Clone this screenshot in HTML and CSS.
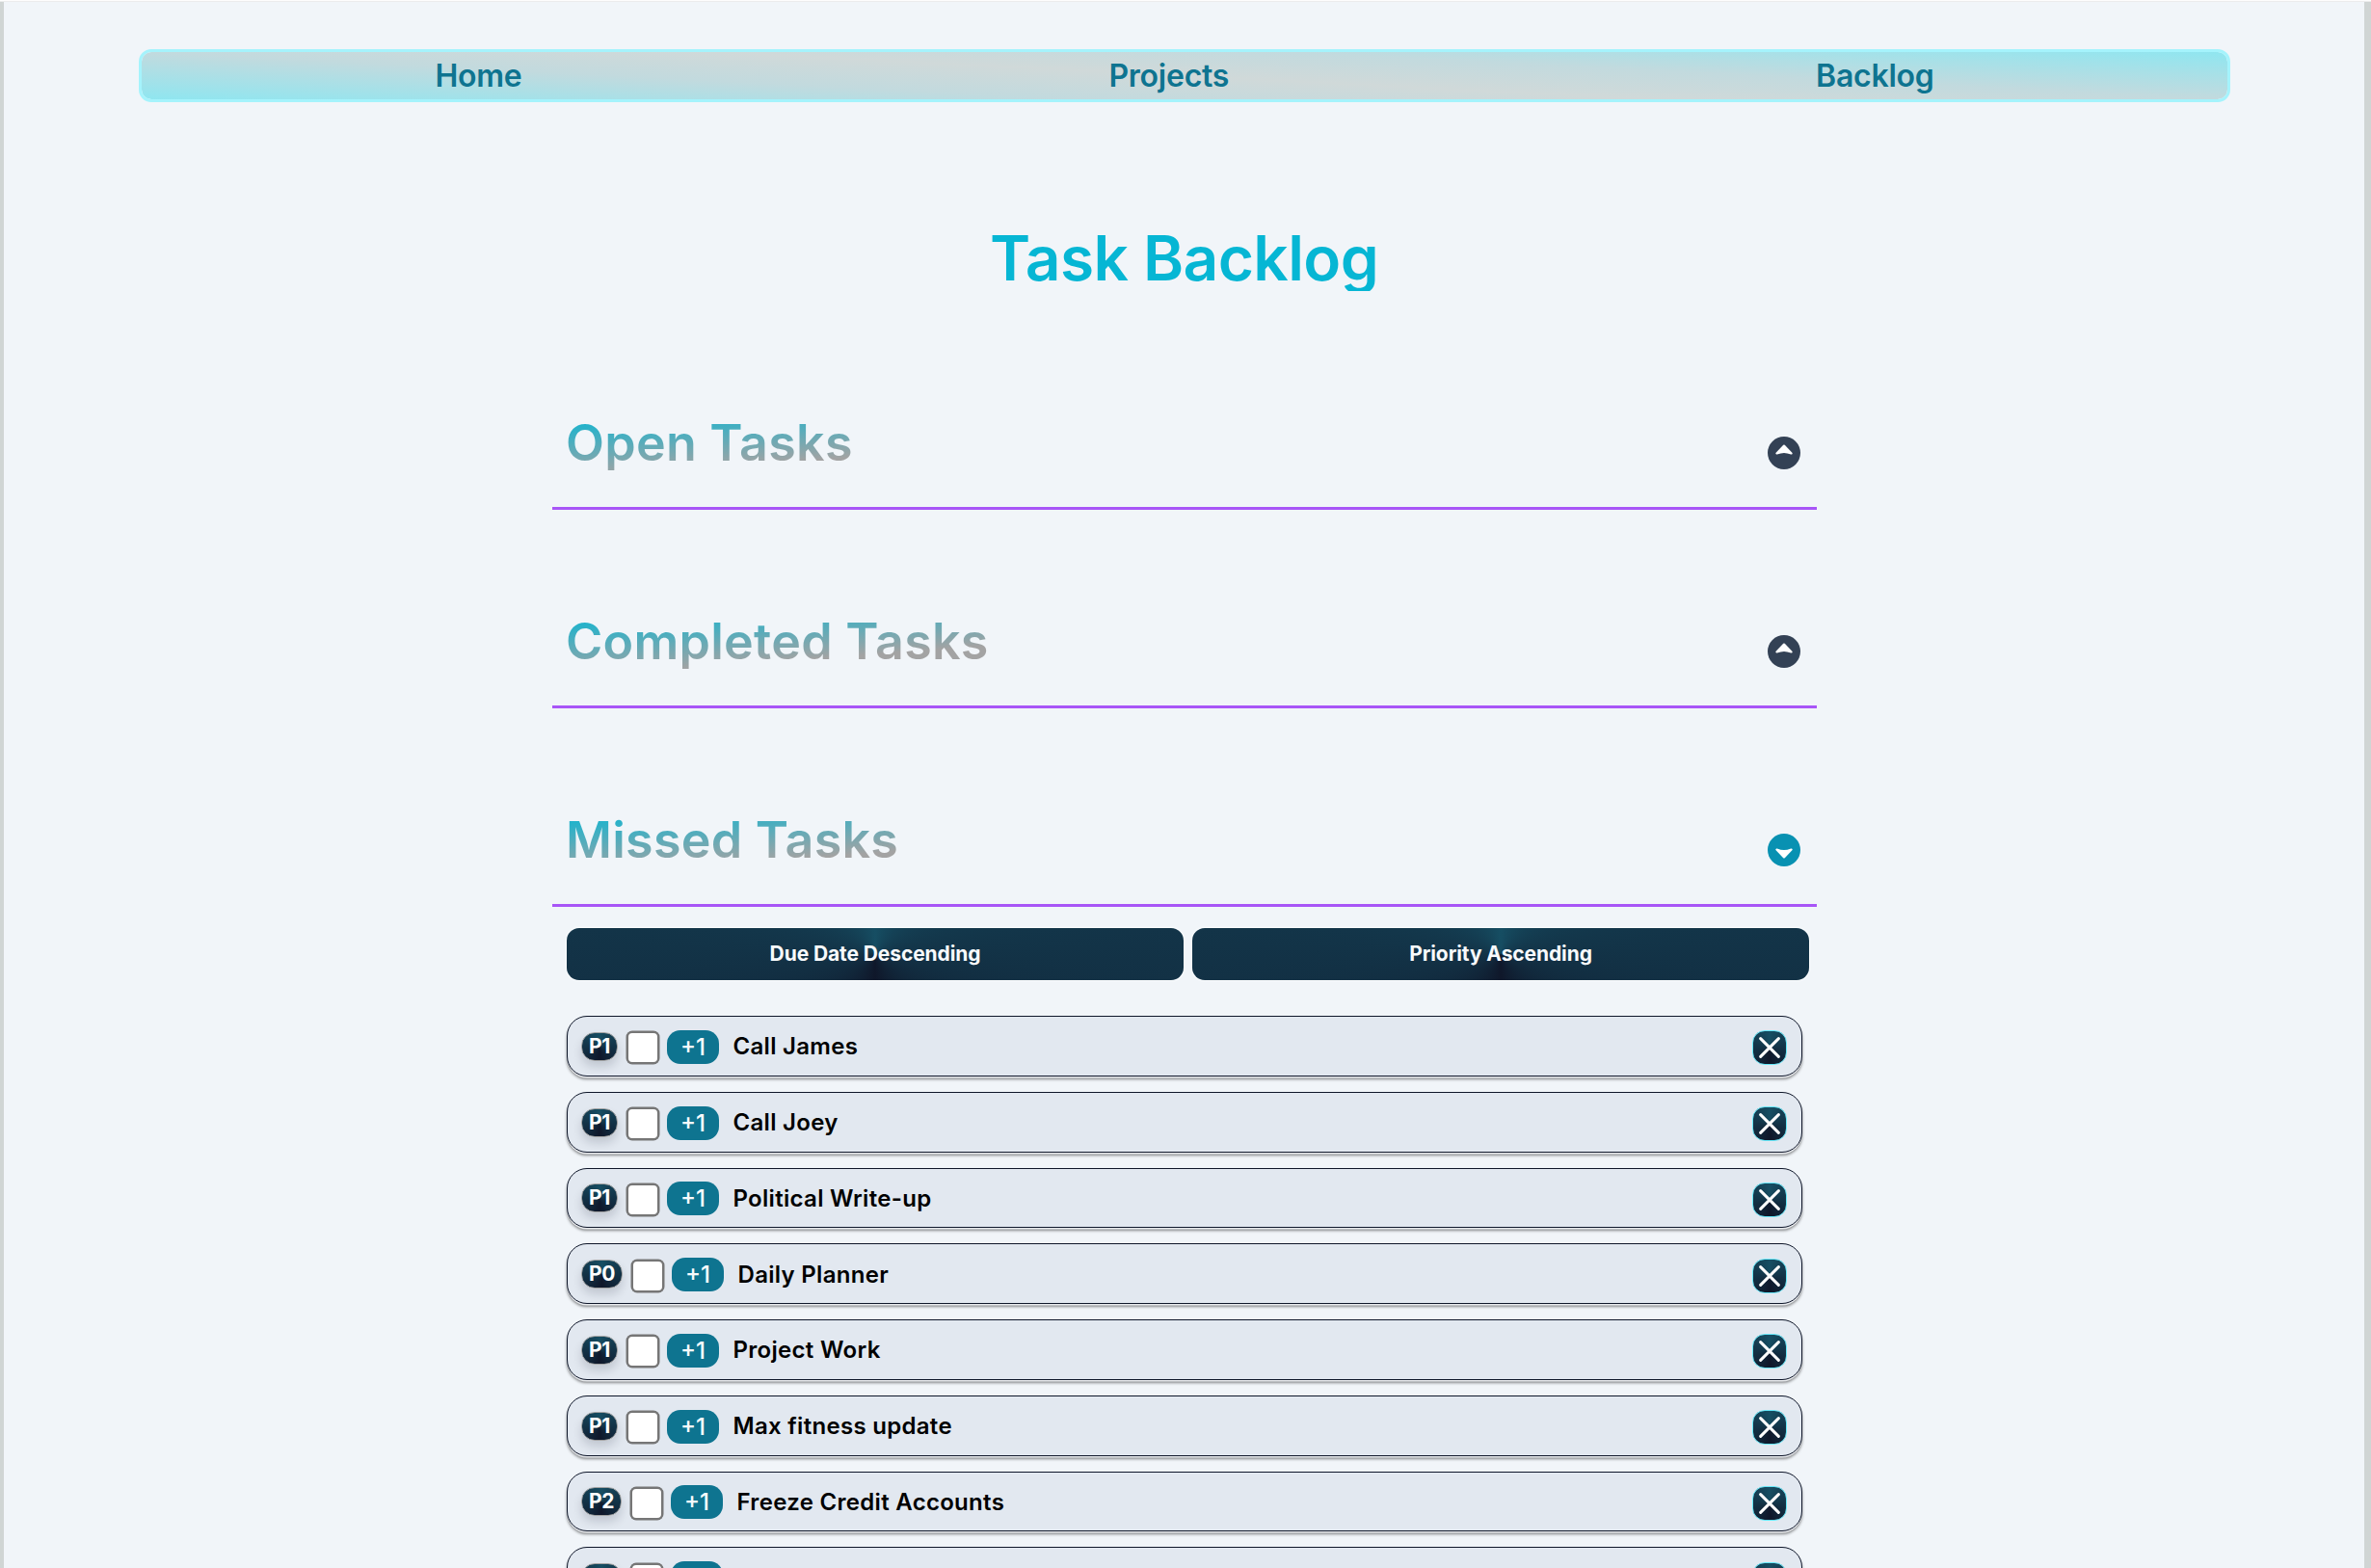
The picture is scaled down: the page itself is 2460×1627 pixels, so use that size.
FILE: index.html
```html
<!DOCTYPE html>
<html lang="en">
<head>
<meta charset="utf-8">
<title>Task Backlog</title>
<link rel="stylesheet" href="styles.css">
</head>
<body>
<svg class="sprite" aria-hidden="true">
  <symbol id="caret" viewBox="0 0 34 34"><path d="M17 9.6 L24.6 17.4 Q20.5 15.8 17 15.8 Q13.5 15.8 9.4 17.4 Z" fill="#fff" stroke="#fff" stroke-width="2.2" stroke-linejoin="round"/></symbol>
  <symbol id="cross" viewBox="0 0 20 20"><path d="M1.5 1.5 L18.5 18.5 M18.5 1.5 L1.5 18.5" fill="none" stroke="#fff" stroke-width="2.7" stroke-linecap="round"/></symbol>
</svg>
<div class="page">
  <nav class="nav"><a>Home</a><a>Projects</a><a>Backlog</a></nav>
  <h1 class="title">Task Backlog</h1>
  <main class="content">
    <section class="group">
      <header class="group-head"><h2>Open Tasks</h2><button class="toggle"><svg><use href="#caret"/></svg></button></header>
    </section>
    <section class="group">
      <header class="group-head"><h2>Completed Tasks</h2><button class="toggle"><svg><use href="#caret"/></svg></button></header>
    </section>
    <section class="group">
      <header class="group-head"><h2>Missed Tasks</h2><button class="toggle expanded"><svg><use href="#caret"/></svg></button></header>
      <div class="sorts"><button class="sort">Due Date Descending</button><button class="sort">Priority Ascending</button></div>
      <ul class="tasks">
        <li class="task"><span class="prio p1">P1</span><span class="check"></span><button class="plus">+1</button><span class="name">Call James</span><button class="remove"><svg><use href="#cross"/></svg></button></li>
        <li class="task"><span class="prio p1">P1</span><span class="check"></span><button class="plus">+1</button><span class="name">Call Joey</span><button class="remove"><svg><use href="#cross"/></svg></button></li>
        <li class="task"><span class="prio p1">P1</span><span class="check"></span><button class="plus">+1</button><span class="name">Political Write-up</span><button class="remove"><svg><use href="#cross"/></svg></button></li>
        <li class="task"><span class="prio p0">P0</span><span class="check"></span><button class="plus">+1</button><span class="name">Daily Planner</span><button class="remove"><svg><use href="#cross"/></svg></button></li>
        <li class="task"><span class="prio p1">P1</span><span class="check"></span><button class="plus">+1</button><span class="name">Project Work</span><button class="remove"><svg><use href="#cross"/></svg></button></li>
        <li class="task"><span class="prio p1">P1</span><span class="check"></span><button class="plus">+1</button><span class="name">Max fitness update</span><button class="remove"><svg><use href="#cross"/></svg></button></li>
        <li class="task"><span class="prio p2">P2</span><span class="check"></span><button class="plus">+1</button><span class="name">Freeze Credit Accounts</span><button class="remove"><svg><use href="#cross"/></svg></button></li>
        <li class="task"><span class="prio p2"></span><span class="check"></span><button class="plus"></button><span class="name"></span><button class="remove"><svg><use href="#cross"/></svg></button></li>
      </ul>
    </section>
  </main>
</div>
</body>
</html>
```
FILE: styles.css
```css
* { box-sizing: border-box; margin: 0; padding: 0; }
html, body { height: 1627px; overflow: hidden; }
body {
  font-family: Inter, "Liberation Sans", sans-serif;
  background: linear-gradient(#fdfdfd 0 1px, #ececec 1px 2px, #d0d5d4 2px);
  padding: 2px 7px 0 4px;
}
button { font: inherit; border: 0; display: flex; align-items: center; justify-content: center; }
.sprite { display: none; }
.page {
  height: 1625px;
  overflow: hidden;
  background: #f1f5f9;
  padding-top: 49px;
}
.nav {
  margin: 0 139px 0 140px;
  height: 55px;
  border: 3px solid #a5f3fc;
  border-radius: 13px;
  background: linear-gradient(2.9deg, #8fe6f0, #c2dade 31%, #d0d9d9 50%, #c2dade 69%, #8fe6f0) padding-box;
  display: flex;
  justify-content: space-around;
  align-items: center;
  font-size: 32px;
  letter-spacing: -.25px;
  font-weight: 600;
  color: #0e7490;
}
.title {
  width: max-content;
  height: 70px;
  margin: 126px auto 0;
  font-size: 64px;
  line-height: 71px;
  letter-spacing: -.6px;
  font-weight: 600;
  color: transparent;
  background: #06b6d4;
  background-clip: text;
}
.content { width: 1312px; margin: 0 0 0 569px; }
.group-head {
  height: 206px;
  padding: 105px 17px 0 14px;
  border-bottom: 3px solid #a855f7;
  display: flex;
  justify-content: space-between;
  align-items: flex-start;
}
.group:first-child .group-head { height: 227px; padding-top: 126px; }
.group-head h2 {
  font-size: 52px;
  line-height: 63px;
  letter-spacing: .25px;
  font-weight: 600;
  color: transparent;
  background: linear-gradient(175.5deg, #06b6d4 1px, #a3a3a3 70px);
  background-clip: text;
}
.toggle {
  width: 34px;
  height: 34px;
  margin-top: 25px;
  border-radius: 50%;
  background: #334155;
}
.toggle svg { width: 34px; height: 34px; }
.toggle.expanded { background: #0891b2; }
.toggle.expanded svg { transform: scaleY(-1); }
.sorts { display: flex; gap: 9px; padding: 22px 8px 0 15px; }
.sort {
  flex: 1;
  height: 54px;
  padding-bottom: 2px;
  border-radius: 13px;
  background: conic-gradient(#164e63, #0f172a, #164e63);
  box-shadow: 0 0 2px 1px #fafcfd;
  color: #f8fafc;
  font-size: 21px;
  letter-spacing: -.1px;
  font-weight: 700;
}
.tasks {
  list-style: none;
  margin: 37px 15px 0;
  display: flex;
  flex-direction: column;
  gap: 16px;
}
.task {
  height: 62.75px;
  padding: 1px 15px 0 14px;
  border: 1px solid #0f172a;
  border-radius: 21px;
  background: #e2e8f0;
  box-shadow: 0 2px 0 -.5px #e8eaed, 0 3px 3px rgba(0, 0, 0, .45);
  display: flex;
  align-items: center;
}
.prio {
  width: 38px;
  height: 30px;
  border: 1px solid #a3a3a3;
  border-radius: 14px;
  background: conic-gradient(#164e63, #0f172a, #164e63);
  box-shadow: 0 6px 10px rgba(15, 23, 42, .15);
  color: #fff;
  font-size: 21px;
  line-height: 28px;
  letter-spacing: -.3px;
  font-weight: 700;
  text-align: center;
}
.prio.p0 { width: 43px; }
.prio.p2 { width: 42px; }
.check {
  width: 34px;
  height: 34px;
  margin: 3px 8px 0 9px;
  border: 2px solid #767676;
  border-radius: 6px;
  background: #fff;
  box-shadow: 0 0 0 .5px #767676;
}
.plus {
  width: 54px;
  height: 35px;
  margin-top: 1px;
  border-radius: 14px;
  background: #0e7490;
  color: #f8fafc;
  font-size: 24px;
  font-weight: 500;
}
.name { flex: 1; margin: 1px 0 0 14.5px; font-size: 24px; line-height: 30px; letter-spacing: .3px; font-weight: 620; color: #000; }
.remove {
  width: 36px;
  height: 36px;
  margin-top: 3px;
  border: 1px solid #67e8f9;
  border-radius: 13px;
  background: conic-gradient(#164e63, #0f172a, #164e63);
}
.remove svg { width: 22px; height: 22px; }
```
